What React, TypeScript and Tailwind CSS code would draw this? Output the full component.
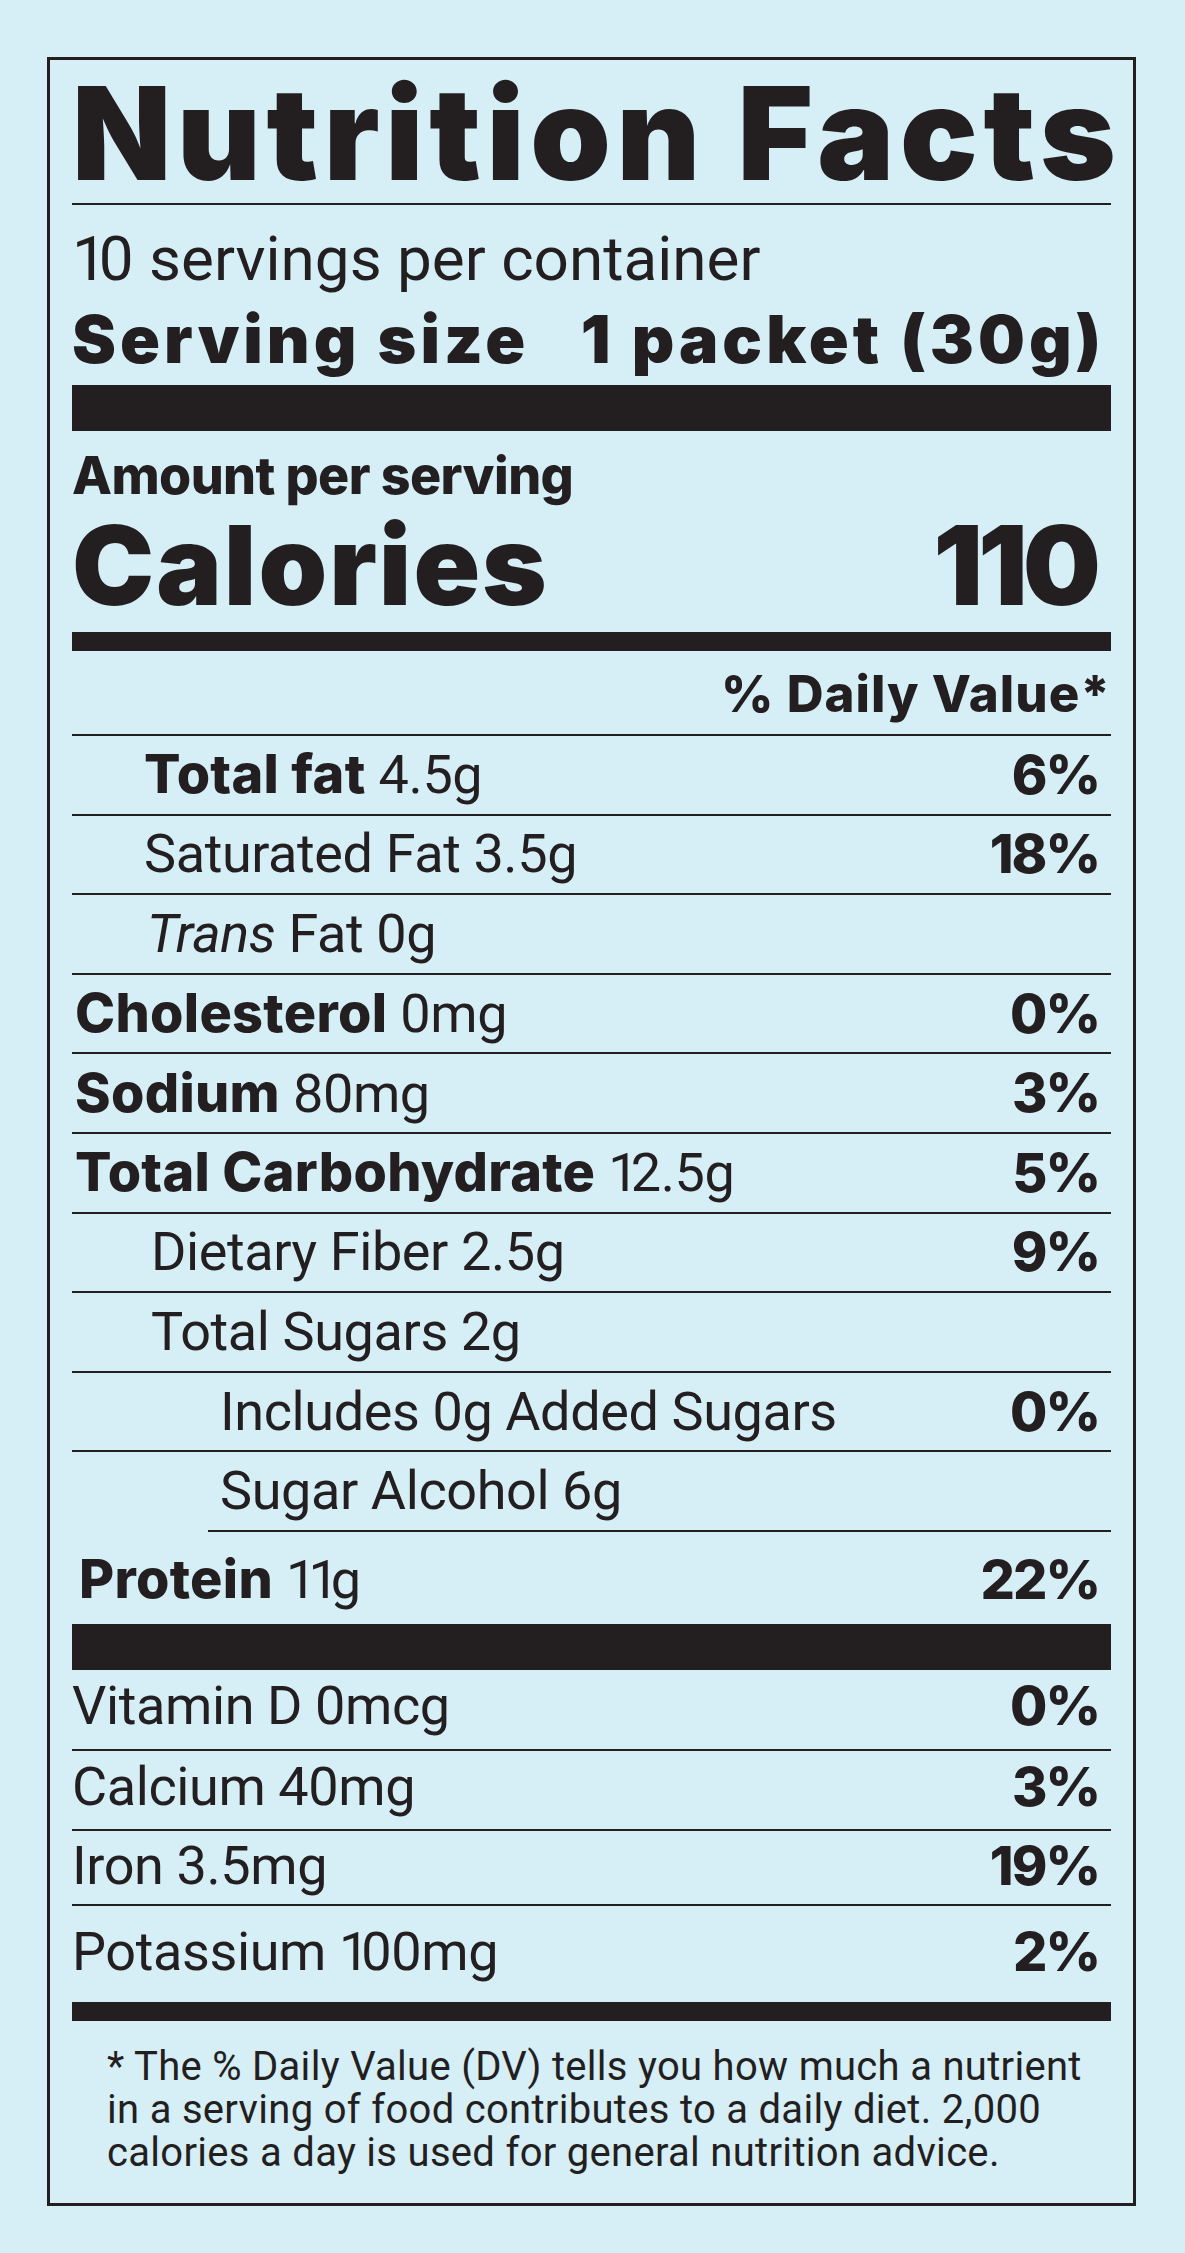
import React from "react"

type Row = {
  bold?: string
  italic?: string
  text: string
  dv?: string
  indent: string
}

const ROWS: Row[] = [
  { bold: "Total fat", text: " 4.5g", dv: "6%", indent: "pl-[72px]" },
  { text: "Saturated Fat 3.5g", dv: "18%", indent: "pl-[72px]" },
  { italic: "Trans", text: " Fat 0g", indent: "pl-[75px]" },
  { bold: "Cholesterol", text: " 0mg", dv: "0%", indent: "pl-[3px]" },
  { bold: "Sodium", text: " 80mg", dv: "3%", indent: "pl-[3px]" },
  { bold: "Total Carbohydrate", text: " 12.5g", dv: "5%", indent: "pl-[3px]" },
  { text: "Dietary Fiber 2.5g", dv: "9%", indent: "pl-[79px]" },
  { text: "Total Sugars 2g", indent: "pl-[79px]" },
  { text: "Includes 0g Added Sugars", dv: "0%", indent: "pl-[148px]" },
]

const VITAMINS = [
  { text: "Vitamin D 0mcg", dv: "0%", h: "h-[79px]", pad: "pb-[6px]" },
  { text: "Calcium 40mg", dv: "3%", h: "h-[78px]", pad: "pb-[6px]" },
  { text: "Iron 3.5mg", dv: "19%", h: "h-[73px]", pad: "pb-[2px]" },
]

const heavy = "font-['Inter','Liberation_Sans',sans-serif]"

// the label font draws a narrow "1"; Roboto's is tabular, so tighten after it
function Txt({ children }: { children: string }) {
  const parts = children.split("1")
  return (
    <>
      {parts.map((p, i) => (
        <React.Fragment key={i}>
          {i > 0 && <span className="tracking-[-8px]">1</span>}
          {p}
        </React.Fragment>
      ))}
    </>
  )
}

function Dv({ value }: { value?: string }) {
  if (!value) return null
  return <span className={`${heavy} font-extrabold tracking-[-2px] pr-[12px]`}>{value}</span>
}

function Bold({ children }: { children: React.ReactNode }) {
  return <span className={`${heavy} font-extrabold tracking-[0.3px]`}>{children}</span>
}

export default function App() {
  return (
    <div className="min-h-screen bg-[#d6eef6] pt-[57px] pb-[48px] font-['Roboto','Liberation_Sans',sans-serif] text-[#231f20]">
      <div className="ml-[47px] w-[1089px] border-[3px] border-[#231f20] px-[22px]">
        {/* header */}
        <div className="pt-[8.5px] pb-[5.5px]">
          <h1 className={`${heavy} text-[129px] leading-none font-black tracking-[5.7px] whitespace-nowrap`}>Nutrition Facts</h1>
        </div>
        <div className="h-[2px] bg-[#231f20]" />

        <div className="pt-[23px] pb-[13px]">
          <p className="text-[62px] leading-none">
            <Txt>10 servings per container</Txt>
          </p>
          <p className={`${heavy} mt-[16px] text-[66px] leading-none font-black tracking-[4px] whitespace-pre`}>
            {"Serving size   1 packet (30g)"}
          </p>
        </div>
        <div className="h-[46px] bg-[#231f20]" />

        <div className="pt-[19px] pb-[12px]">
          <p className={`${heavy} text-[52px] leading-none font-extrabold tracking-[-0.6px]`}>Amount per serving</p>
          <div className={`${heavy} mt-[8px] flex items-baseline justify-between text-[110px] leading-none font-black`}>
            <span className="tracking-[2px]">Calories</span>
            <span className="pr-[15px] tracking-[-5px]">110</span>
          </div>
        </div>
        <div className="h-[19px] bg-[#231f20]" />

        <div className="pt-[17px] pb-[15px] text-right">
          <span className={`${heavy} text-[51px] leading-none font-extrabold tracking-[1px]`}>% Daily Value*</span>
        </div>

        {/* nutrients */}
        <div className="text-[54px] leading-none tracking-[-0.4px]">
          {ROWS.map((row, i) => (
            <div key={i} className="border-t-2 border-[#231f20]">
              <div className={`flex h-[77.6px] items-center justify-between ${row.indent}`}>
                <span>
                  {row.bold && <Bold>{row.bold}</Bold>}
                  {row.italic && <span className="italic">{row.italic}</span>}
                  <Txt>{row.text}</Txt>
                </span>
                <Dv value={row.dv} />
              </div>
            </div>
          ))}
          <div className="border-t-2 border-[#231f20]">
            <div className="flex h-[77.6px] items-center pl-[148px]">Sugar Alcohol 6g</div>
          </div>
          <div className="ml-[136px] h-[2px] bg-[#231f20]" />
          <div className="flex h-[92px] items-center justify-between pl-[7px] pt-[4px]">
            <span>
              <Bold>Protein</Bold> <Txt>11g</Txt>
            </span>
            <Dv value="22%" />
          </div>
          <div className="h-[46px] bg-[#231f20]" />

          {VITAMINS.map((v, i) => (
            <div key={v.text}>
              {i > 0 && <div className="h-[2px] bg-[#231f20]" />}
              <div className={`flex items-center justify-between ${v.h} ${v.pad}`}>
                <span>
                  <Txt>{v.text}</Txt>
                </span>
                <Dv value={v.dv} />
              </div>
            </div>
          ))}
          <div className="h-[2px] bg-[#231f20]" />
          <div className="flex h-[96px] items-center justify-between pb-[4px]">
            <span>
              <Txt>Potassium 100mg</Txt>
            </span>
            <Dv value="2%" />
          </div>
        </div>
        <div className="h-[19px] bg-[#231f20]" />

        <p className="pt-[24px] pb-[29px] pl-[35px] text-[40px] leading-[43px] tracking-[0.3px] whitespace-nowrap">
          <span className="block">* The % Daily Value (DV) tells you how much a nutrient</span>
          <span className="block">in a serving of food contributes to a daily diet. 2,000</span>
          <span className="block">calories a day is used for general nutrition advice.</span>
        </p>
      </div>
    </div>
  )
}
